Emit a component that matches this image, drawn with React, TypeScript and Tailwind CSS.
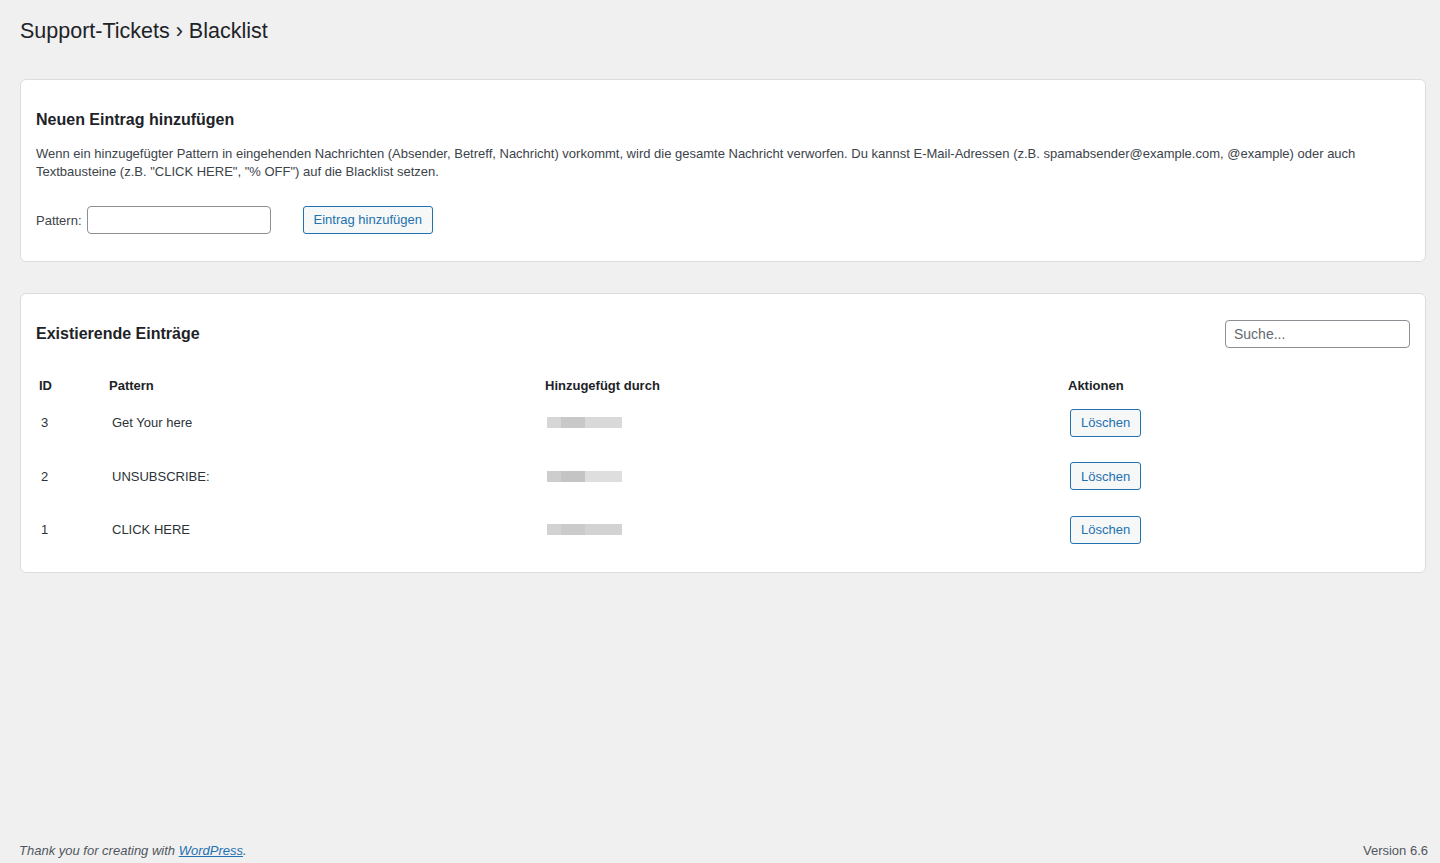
const entries = [
  { id: 3, pattern: 'Get Your here', bars: ['bg-[#d6d6d6]', 'bg-[#c8c8c8]', 'bg-[#d9d9d9]'] },
  { id: 2, pattern: 'UNSUBSCRIBE:', bars: ['bg-[#cdcdcd]', 'bg-[#c4c4c4]', 'bg-[#dedede]'] },
  { id: 1, pattern: 'CLICK HERE', bars: ['bg-[#d2d2d2]', 'bg-[#cbcbcb]', 'bg-[#d3d3d3]'] },
];

export default function App() {
  return (
    <div className="min-h-screen flex flex-col bg-[#f0f0f1] text-[#3c434a] font-['Liberation_Sans',Arial,sans-serif] text-[13px]">
      <div className="pl-5 pr-[14px]">
        {/* Title */}
        <h1 className="text-[21.5px] leading-[30px] text-[#1d2327] pt-[16px]">Support-Tickets › Blacklist</h1>

        {/* Add form */}
        <div className="mt-[33px] bg-white border border-[#dcdcde] rounded-md px-[15px] pt-[30px] pb-[27px]">
          <h2 className="text-[16px] leading-5 font-bold text-[#1d2327]">Neuen Eintrag hinzufügen</h2>
          <p className="mt-[15px] leading-[18px] max-w-[1325px]">
            Wenn ein hinzugefügter Pattern in eingehenden Nachrichten (Absender, Betreff, Nachricht) vorkommt, wird die gesamte Nachricht verworfen. Du kannst E-Mail-Adressen (z.B. spamabsender@example.com, @example) oder auch Textbausteine (z.B. "CLICK HERE", "% OFF") auf die Blacklist setzen.
          </p>
          <div className="mt-[25px] flex items-start">
            <label className="mr-[5px] leading-[18px] pt-[6px]">Pattern:</label>
            <input className="w-[184px] h-[28px] border border-[#8c8f94] rounded-[4px] px-2 bg-white" />
            <button className="ml-[32px] h-[28px] px-[10px] border border-[#2271b1] rounded-[3px] bg-[#f6f7f7] text-[#2271b1]">
              Eintrag hinzufügen
            </button>
          </div>
        </div>

        {/* Existing entries */}
        <div className="mt-[31px] bg-white border border-[#dcdcde] rounded-md px-[15px] pt-[26px] pb-[15px]">
          <div className="flex items-center justify-between h-[28px]">
            <h2 className="text-[16px] font-bold text-[#1d2327]">Existierende Einträge</h2>
            <input
              placeholder="Suche..."
              className="w-[185px] h-[28px] border border-[#8c8f94] rounded-[4px] px-2 text-[14px] placeholder:text-[#646970] bg-white"
            />
          </div>

          <div className="mt-[28px]">
            <div className="grid grid-cols-[70px_436px_523px_1fr] h-5 items-center font-bold text-[#1d2327]">
              <div className="pl-[3px]">ID</div>
              <div className="pl-[3px]">Pattern</div>
              <div className="pl-[3px]">Hinzugefügt durch</div>
              <div className="pl-[3px]">Aktionen</div>
            </div>
            {entries.map((e) => (
              <div key={e.id} className="grid grid-cols-[70px_436px_523px_1fr] h-[53.5px] items-center text-[#2c3338]">
                <div className="pl-[5px]">{e.id}</div>
                <div className="pl-[6px]">{e.pattern}</div>
                <div className="pl-[5px]">
                  <div className="flex w-[75px] h-[11px]">
                    <div className={`w-[14px] ${e.bars[0]}`} />
                    <div className={`w-[24px] ${e.bars[1]}`} />
                    <div className={`flex-1 ${e.bars[2]}`} />
                  </div>
                </div>
                <div className="pl-[5px]">
                  <button className="h-[28px] px-[10px] border border-[#2271b1] rounded-[3px] bg-[#f6f7f7] text-[#2271b1]">
                    Löschen
                  </button>
                </div>
              </div>
            ))}
          </div>
        </div>
      </div>

      {/* Footer */}
      <div className="mt-auto flex justify-between items-center pl-[19px] pr-3 pb-[3px] text-[#50575e]">
        <span className="italic">
          Thank you for creating with <a className="text-[#2271b1] underline">WordPress</a>.
        </span>
        <span>Version 6.6</span>
      </div>
    </div>
  );
}
